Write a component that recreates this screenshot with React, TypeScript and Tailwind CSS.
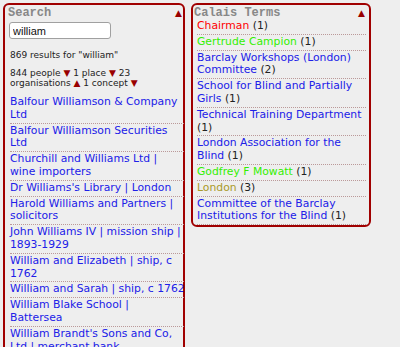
import React from 'react';

// Search panel results (line breaks as they fall in the narrow column)
const results: string[] = [
  'Balfour Williamson & Company\nLtd',
  'Balfour Williamson Securities\nLtd',
  'Churchill and Williams Ltd |\nwine importers',
  "Dr Williams's Library | London",
  'Harold Williams and Partners |\nsolicitors',
  'John Williams IV | mission ship |\n1893-1929',
  'William and Elizabeth | ship, c\n1762',
  'William and Sarah | ship, c 1762',
  'William Blake School |\nBattersea',
  "William Brandt's Sons and Co,\nLtd | merchant bank",
];

interface Term {
  name: string;
  count: number;
  color: string;
}

const terms: Term[] = [
  { name: 'Chairman', count: 1, color: 'text-[#ff0000]' },
  { name: 'Gertrude Campion', count: 1, color: 'text-[#33ee00]' },
  { name: 'Barclay Workshops (London) Committee', count: 2, color: 'text-[#2020e8]' },
  { name: 'School for Blind and Partially Girls', count: 1, color: 'text-[#2020e8]' },
  { name: 'Technical Training Department', count: 1, color: 'text-[#2020e8]' },
  { name: 'London Association for the Blind', count: 1, color: 'text-[#2020e8]' },
  { name: 'Godfrey F Mowatt', count: 1, color: 'text-[#33ee00]' },
  { name: 'London', count: 3, color: 'text-[#aa9a2a]' },
  { name: 'Committee of the Barclay Institutions for the Blind', count: 1, color: 'text-[#2020e8]' },
];

function PanelTitle({ title }: { title: string }) {
  return (
    <div className="flex h-[14px] items-start justify-between pt-[2px]">
      <span className="font-['Liberation_Mono',monospace] text-[12px] font-bold leading-[12px] text-[#888888]">
        {title}
      </span>
      <span className="mr-[1px] text-[9px] leading-[12px] text-[#990000]">▲</span>
    </div>
  );
}

export default function App() {
  return (
    <div className="flex h-[347px] items-start gap-[6px] overflow-hidden bg-[#eeeeee] pl-[3px] pt-[3px] font-['DejaVu_Sans',sans-serif]">
      {/* Search */}
      <div className="h-[360px] w-[182px] shrink-0 rounded-[6px] border-2 border-[#a00000] pl-[3px] pr-0">
        <PanelTitle title="Search" />
        <input
          defaultValue="william"
          className="ml-[1px] mt-[3px] block h-[17px] w-[102px] rounded-[3px] border border-[#a0a0a0] bg-white px-[3px] font-['Liberation_Sans',sans-serif] text-[11px] text-[#111] outline-none"
        />
        <div className="pl-[2px] text-[9px] leading-[10px] text-[#222]">
          <p className="mt-[11px]">869 results for "william"</p>
          <p className="mt-[8px]">
            844 people <span className="text-[#990000]">▼</span> 1 place{' '}
            <span className="text-[#990000]">▼</span> 23
            <br />
            organisations <span className="text-[#990000]">▲</span> 1 concept{' '}
            <span className="text-[#990000]">▼</span>
          </p>
        </div>
        <ul className="mt-[7px] w-[176px] pl-[2px]">
          {results.map((r) => (
            <li
              key={r}
              className="whitespace-pre border-b border-dotted border-[#bb9999] py-[1px] text-[10.8px] leading-[12.8px] text-[#2020e8]"
            >
              {r}
            </li>
          ))}
        </ul>
      </div>

      {/* Calais Terms */}
      <div className="w-[180px] shrink-0 rounded-[6px] border-2 border-[#a00000] pl-[1px] pr-[3px]">
        <PanelTitle title="Calais Terms" />
        <ul className="pl-[3px]">
          {terms.map((t) => (
            <li
              key={t.name}
              className="border-b border-dotted border-[#bb9999] py-[1px] text-[10.8px] leading-[12.8px]"
            >
              <span className={t.color}>{t.name}</span>{' '}
              <span className="text-[#222]">({t.count})</span>
            </li>
          ))}
        </ul>
      </div>
    </div>
  );
}
